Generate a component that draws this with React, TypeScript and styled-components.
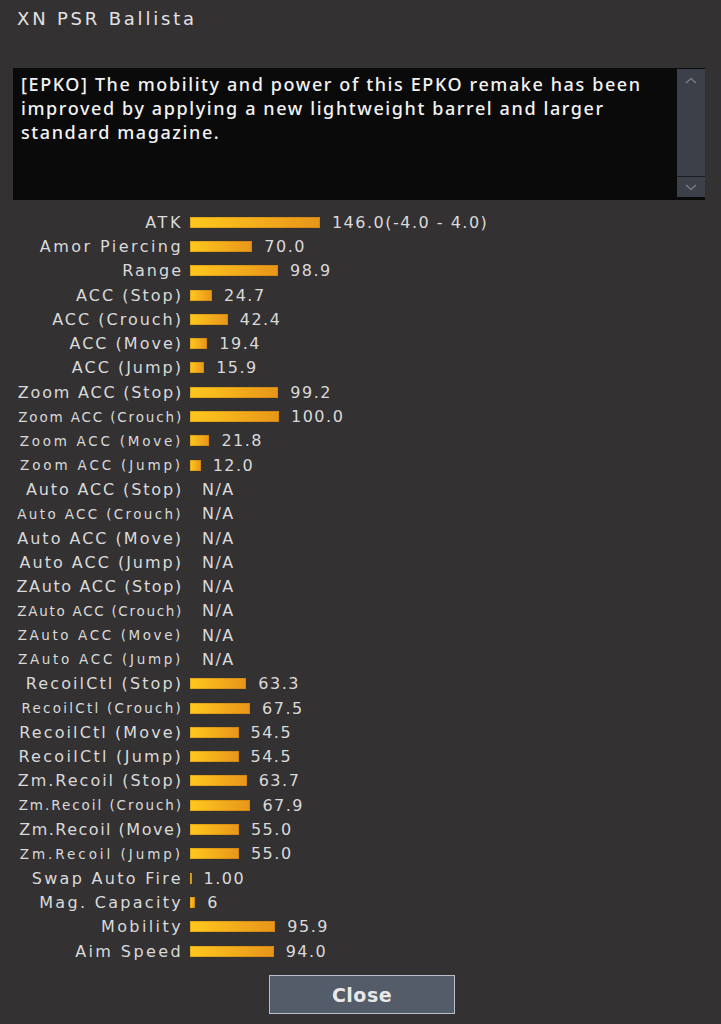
import React from 'react'
import styled, { createGlobalStyle } from 'styled-components'

const GlobalStyle = createGlobalStyle`
  html, body {
    margin: 0;
    padding: 0;
    background: #333132;
  }
`

const Page = styled.div`
  width: 721px;
  height: 1024px;
  background: #333132;
  font-family: 'DejaVu Sans', Verdana, sans-serif;
  color: #dcdcdc;
  display: flex;
  flex-direction: column;
  box-sizing: border-box;
  overflow: hidden;
`

const Title = styled.div`
  height: 68px;
  padding: 8px 0 0 17px;
  box-sizing: border-box;
  font-size: 18px;
  letter-spacing: 2.8px;
  color: #e2e2e2;
`

const DescBox = styled.div`
  margin: 0 16px 0 13px;
  height: 132px;
  background: #0a0a0a;
  display: flex;
`

const DescText = styled.div`
  flex: 1;
  padding: 4px 8px 0 8px;
  font-family: 'Noto Sans', sans-serif;
  font-weight: 500;
  font-size: 18px;
  letter-spacing: 1.6px;
  line-height: 24px;
  color: #f2f2f2;
`

const ScrollBar = styled.div`
  width: 28px;
  margin: 1px 0 3px 0;
  background: #3b4049;
  display: flex;
  flex-direction: column;
`

const ScrollTrack = styled.div`
  flex: 1;
  display: flex;
  justify-content: center;
  padding-top: 8px;
  border-bottom: 1px solid #1c1e22;
`

const ScrollArrow = styled.div`
  height: 20px;
  display: flex;
  justify-content: center;
  align-items: center;
`

const Stats = styled.div`
  margin-top: 10px;
  display: grid;
  grid-template-columns: 170px 1fr;
  column-gap: 7px;
  padding-left: 13px;
`

const Label = styled.div<{ $small?: boolean; $spacing?: number }>`
  height: 24.3px;
  display: flex;
  align-items: center;
  justify-content: flex-end;
  white-space: nowrap;
  font-size: ${(p) => (p.$small ? '13.5px' : '16px')};
  letter-spacing: ${(p) => (p.$spacing ?? (p.$small ? 1.8 : 2))}px;
  color: #dadada;
`

const ValueCell = styled.div`
  height: 24.3px;
  display: flex;
  align-items: center;
  gap: 12px;
`

const Bar = styled.div`
  height: 11px;
  background: linear-gradient(to right, #ffc81e, #e8951a);
  box-shadow: inset 0 0 0 1px rgba(150, 90, 0, 0.25);
`

const Value = styled.span`
  font-size: 16px;
  letter-spacing: 1.5px;
  color: #dadada;
`

const Footer = styled.div`
  margin-top: 12px;
  display: flex;
  justify-content: center;
  padding-left: 3px;
`

const CloseButton = styled.button`
  width: 186px;
  height: 39px;
  background: #545b69;
  border: 1px solid #b9bec7;
  color: #e8e8e8;
  font-family: 'DejaVu Sans', sans-serif;
  font-weight: bold;
  font-size: 19px;
  letter-spacing: 0.5px;
  padding: 0;
`

type Stat = { label: string; value?: number; text: string; small?: boolean; spacing?: number }

const stats: Stat[] = [
  { label: 'ATK', value: 146.0, text: '146.0(-4.0 - 4.0)', spacing: 2.6 },
  { label: 'Amor Piercing', value: 70.0, text: '70.0', spacing: 2.45 },
  { label: 'Range', value: 98.9, text: '98.9' },
  { label: 'ACC (Stop)', value: 24.7, text: '24.7' },
  { label: 'ACC (Crouch)', value: 42.4, text: '42.4' },
  { label: 'ACC (Move)', value: 19.4, text: '19.4' },
  { label: 'ACC (Jump)', value: 15.9, text: '15.9' },
  { label: 'Zoom ACC (Stop)', value: 99.2, text: '99.2', spacing: 1.8 },
  { label: 'Zoom ACC (Crouch)', value: 100.0, text: '100.0', small: true, spacing: 1.85 },
  { label: 'Zoom ACC (Move)', value: 21.8, text: '21.8', small: true, spacing: 2.75 },
  { label: 'Zoom ACC (Jump)', value: 12.0, text: '12.0', small: true, spacing: 2.85 },
  { label: 'Auto ACC (Stop)', text: 'N/A', spacing: 1.85 },
  { label: 'Auto ACC (Crouch)', text: 'N/A', small: true, spacing: 2.35 },
  { label: 'Auto ACC (Move)', text: 'N/A' },
  { label: 'Auto ACC (Jump)', text: 'N/A' },
  { label: 'ZAuto ACC (Stop)', text: 'N/A', spacing: 1.65 },
  { label: 'ZAuto ACC (Crouch)', text: 'N/A', small: true, spacing: 1.7 },
  { label: 'ZAuto ACC (Move)', text: 'N/A', small: true, spacing: 2.6 },
  { label: 'ZAuto ACC (Jump)', text: 'N/A', small: true, spacing: 2.7 },
  { label: 'RecoilCtl (Stop)', value: 63.3, text: '63.3', spacing: 2.1 },
  { label: 'RecoilCtl (Crouch)', value: 67.5, text: '67.5', small: true, spacing: 2.25 },
  { label: 'RecoilCtl (Move)', value: 54.5, text: '54.5', spacing: 2.1 },
  { label: 'RecoilCtl (Jump)', value: 54.5, text: '54.5', spacing: 2.3 },
  { label: 'Zm.Recoil (Stop)', value: 63.7, text: '63.7' },
  { label: 'Zm.Recoil (Crouch)', value: 67.9, text: '67.9', small: true, spacing: 1.95 },
  { label: 'Zm.Recoil (Move)', value: 55.0, text: '55.0', spacing: 1.5 },
  { label: 'Zm.Recoil (Jump)', value: 55.0, text: '55.0', small: true, spacing: 2.95 },
  { label: 'Swap Auto Fire', value: 1.0, text: '1.00', spacing: 2.3 },
  { label: 'Mag. Capacity', value: 6, text: '6', spacing: 2.3 },
  { label: 'Mobility', value: 95.9, text: '95.9', spacing: 2.4 },
  { label: 'Aim Speed', value: 94.0, text: '94.0', spacing: 2.4 },
]

const Chevron = ({ up }: { up?: boolean }) => (
  <svg width="12" height="7" viewBox="0 0 12 7">
    <polyline
      points={up ? '1,6 6,1.5 11,6' : '1,1 6,5.5 11,1'}
      fill="none"
      stroke="#7b818b"
      strokeWidth="1.2"
    />
  </svg>
)

const App = () => {
  return (
    <Page>
      <GlobalStyle />
      <Title>XN PSR Ballista</Title>
      <DescBox>
        <DescText>
          [EPKO] The mobility and power of this EPKO remake has been improved by applying a new
          lightweight barrel and larger standard magazine.
        </DescText>
        <ScrollBar>
          <ScrollTrack>
            <Chevron up />
          </ScrollTrack>
          <ScrollArrow>
            <Chevron />
          </ScrollArrow>
        </ScrollBar>
      </DescBox>
      <Stats>
        {stats.map((s) => (
          <React.Fragment key={s.label}>
            <Label $small={s.small} $spacing={s.spacing}>
              {s.label}
            </Label>
            <ValueCell>
              <Bar
                style={{
                  width: s.value !== undefined ? `${Math.max(1.5, s.value * 0.89)}px` : 0,
                }}
              />
              <Value>{s.text}</Value>
            </ValueCell>
          </React.Fragment>
        ))}
      </Stats>
      <Footer>
        <CloseButton>Close</CloseButton>
      </Footer>
    </Page>
  )
}

export default App
